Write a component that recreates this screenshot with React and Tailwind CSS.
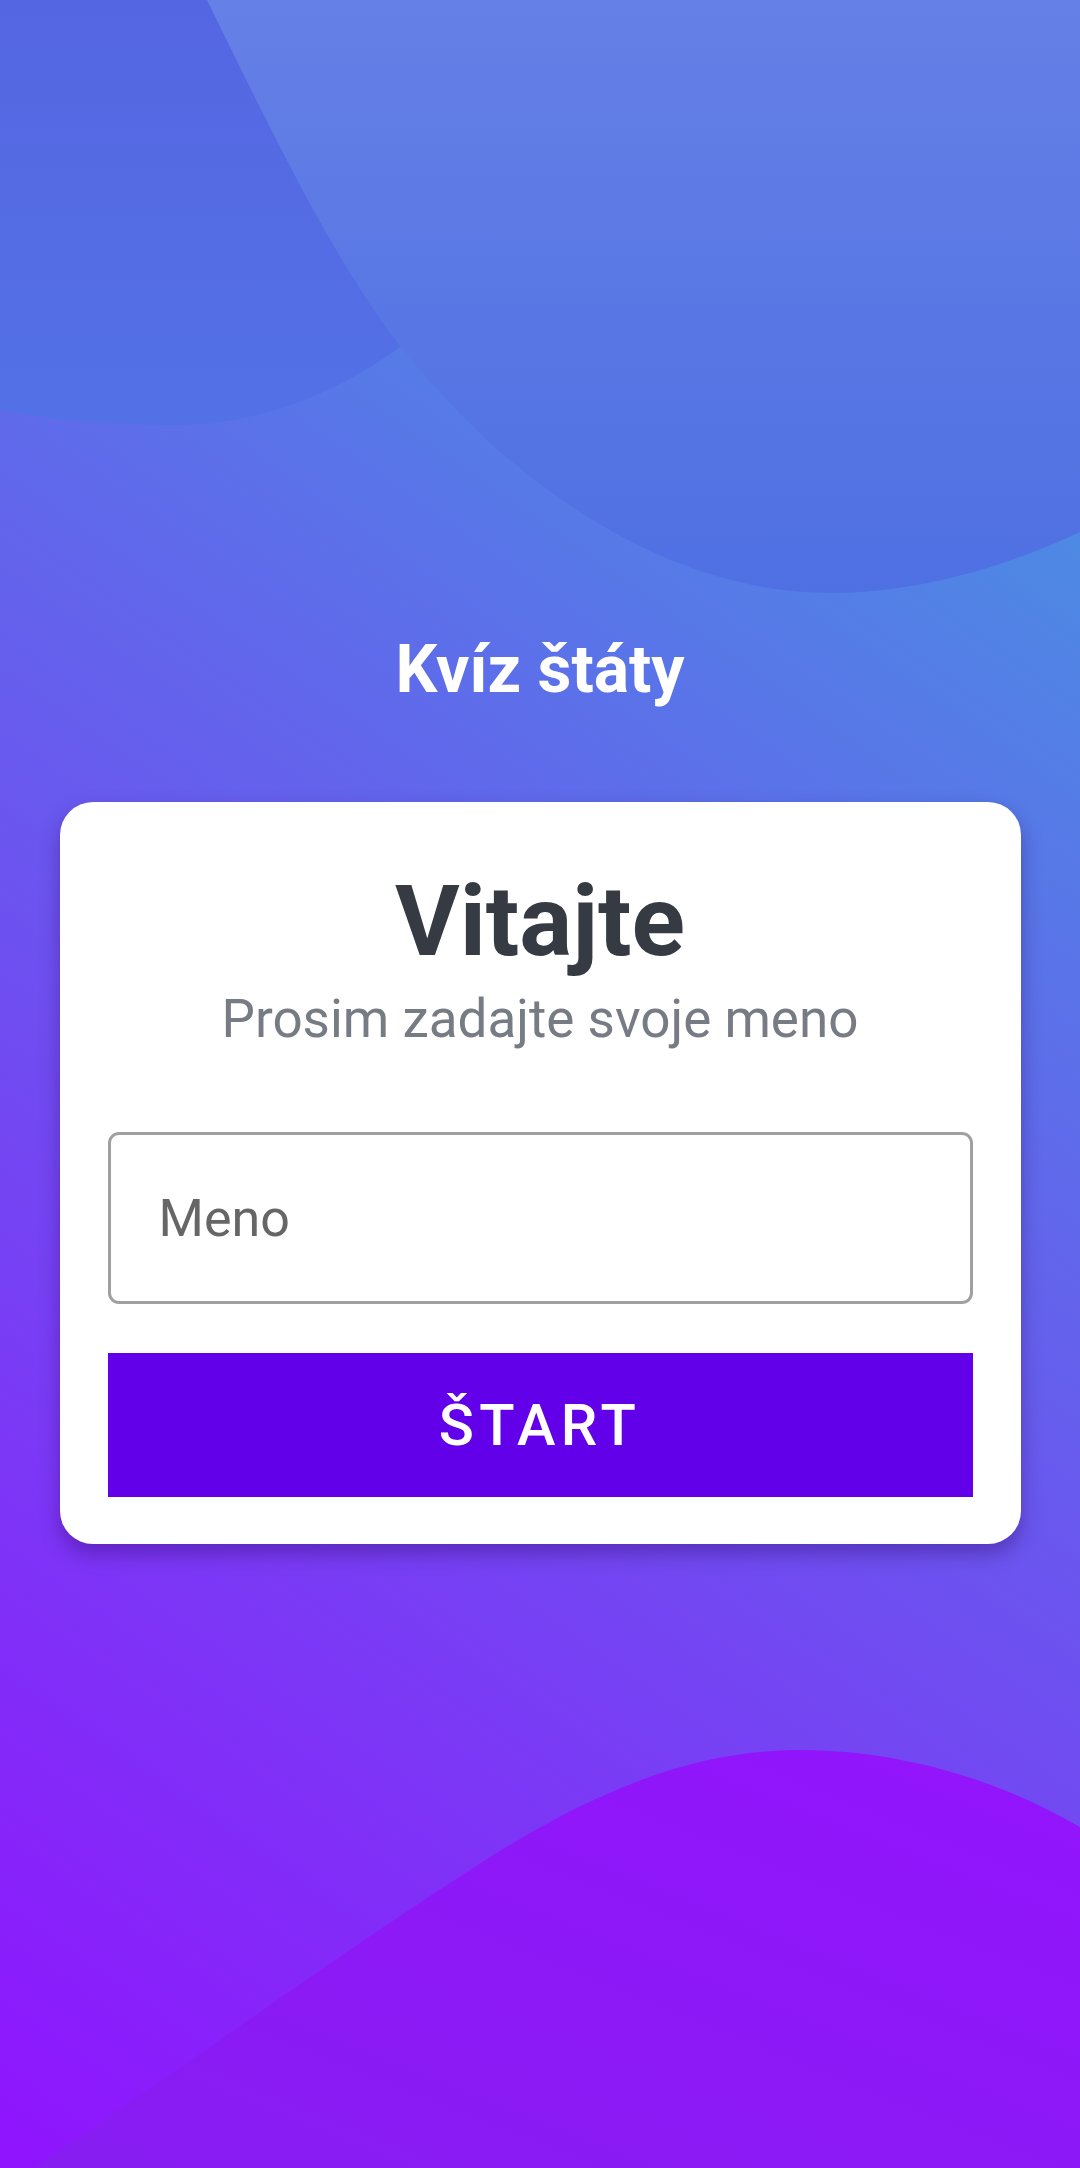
import React, { useState } from 'react';

function Background() {
  return (
    <svg
      className="absolute inset-0 w-full h-full"
      viewBox="0 0 1080 2168"
      preserveAspectRatio="none"
    >
      <defs>
        <linearGradient id="leftBlob" x1="0" y1="0" x2="0" y2="1">
          <stop offset="0" stopColor="#5566e2" />
          <stop offset="1" stopColor="#5371e6" />
        </linearGradient>
        <linearGradient id="bigBlob" x1="0" y1="0" x2="0" y2="1">
          <stop offset="0" stopColor="#6580e6" />
          <stop offset="1" stopColor="#4f70e3" />
        </linearGradient>
        <linearGradient id="bottomBlob" x1="1" y1="0" x2="0" y2="1">
          <stop offset="0" stopColor="#9314fd" />
          <stop offset="1" stopColor="#871df1" />
        </linearGradient>
      </defs>
      {/* top left blob */}
      <path
        d="M0 0 L520 0 L520 230 C 450 320 330 425 175 425 C 100 425 45 418 0 410 Z"
        fill="url(#leftBlob)"
      />
      {/* big top blob */}
      <path
        d="M207 0 C 290 170 350 290 420 370 C 530 500 680 593 830 593 C 920 593 1010 565 1080 532 L1080 0 Z"
        fill="url(#bigBlob)"
      />
      {/* bottom blob */}
      <path
        d="M34 2168 C 180 2070 330 1960 470 1870 C 600 1785 700 1750 800 1750 C 900 1750 1000 1780 1080 1827 L1080 2168 Z"
        fill="url(#bottomBlob)"
      />
    </svg>
  );
}

export default function App() {
  const [name, setName] = useState('');

  return (
    <div
      className="relative w-full h-[2168px] overflow-hidden bg-[linear-gradient(35deg,#9013fe_0%,#4a90e2_86%)]"
      style={{ fontFamily: 'Roboto, "Noto Sans", sans-serif' }}
    >
      <Background />

      <div className="relative flex flex-col items-center pt-[630px]">
        {/* Title */}
        <h1 className="text-[66px] leading-[80px] font-bold text-white">
          Kvíz štáty
        </h1>

        {/* Card */}
        <div className="mt-[92px] w-[961px] bg-white rounded-[33px] px-[48px] pt-[70px] pb-[47px] shadow-[0_10px_20px_rgba(40,0,90,0.35)]">
          <h2 className="text-center text-[99px] leading-none font-bold text-[#353a43]">
            Vitajte
          </h2>
          <p className="mt-[15px] text-center text-[53px] leading-[66px] text-[#767b84]">
            Prosim zadajte svoje meno
          </p>

          <input
            value={name}
            onChange={(e) => setName(e.target.value)}
            placeholder="Meno"
            className="mt-[80px] w-full h-[172px] border-[3px] border-[#a0a0a0] rounded-[11px] pl-[48px] pr-[48px] text-[52px] text-[#333] placeholder:text-[#666666] outline-none bg-white"
          />

          <button className="mt-[49px] w-full h-[144px] bg-[#6200ea] text-white text-[58px] font-medium tracking-[0.09em] uppercase">
            Štart
          </button>
        </div>
      </div>
    </div>
  );
}
